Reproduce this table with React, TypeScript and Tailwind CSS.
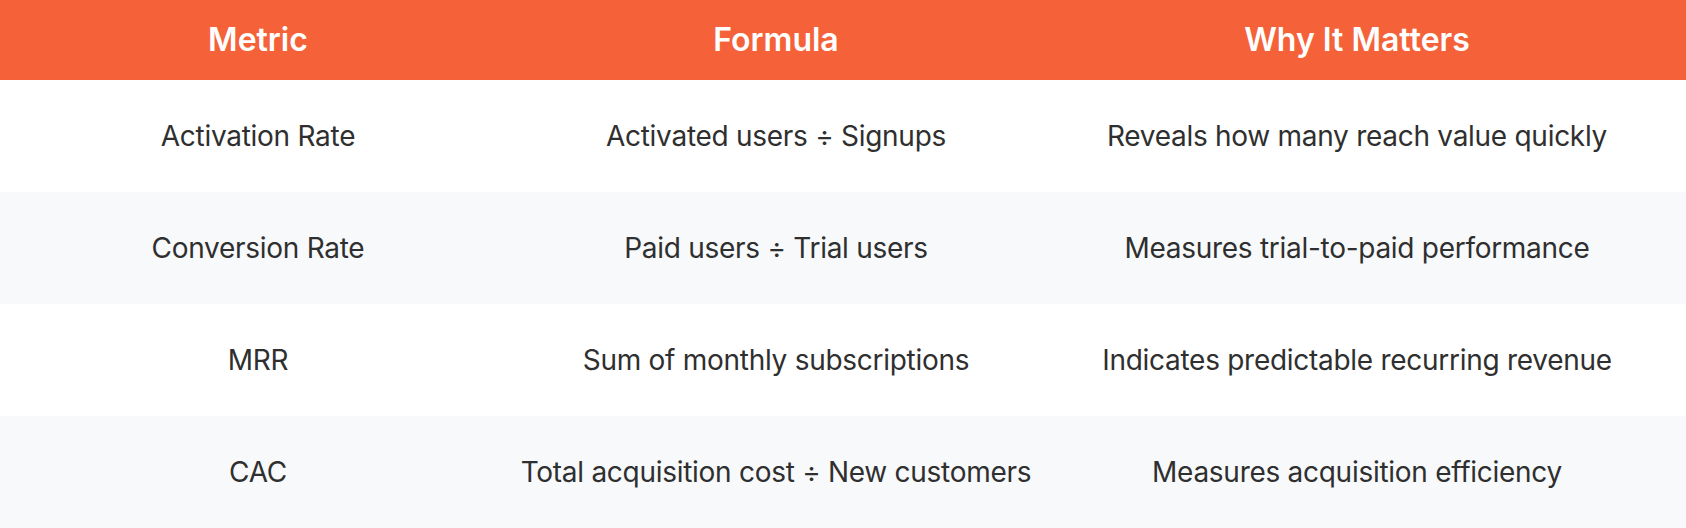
const rows = [
  { metric: 'Activation Rate', formula: 'Activated users ÷ Signups', why: 'Reveals how many reach value quickly' },
  { metric: 'Conversion Rate', formula: 'Paid users ÷ Trial users', why: 'Measures trial-to-paid performance' },
  { metric: 'MRR', formula: 'Sum of monthly subscriptions', why: 'Indicates predictable recurring revenue' },
  { metric: 'CAC', formula: 'Total acquisition cost ÷ New customers', why: 'Measures acquisition efficiency' },
];

export default function App() {
  return (
    <div className="w-[1686px] h-[528px] bg-white font-['Inter','Liberation_Sans',sans-serif] overflow-hidden">
      {/* Header */}
      <div className="grid grid-cols-[516px_520px_642px] h-20 items-center bg-[#f5623a] text-white text-[32px] font-semibold text-center whitespace-nowrap">
        <div>Metric</div>
        <div>Formula</div>
        <div>Why It Matters</div>
      </div>

      {/* Rows */}
      {rows.map((r, i) => (
        <div
          key={r.metric}
          className={`grid grid-cols-[516px_520px_642px] h-28 items-center text-center text-[28px] tracking-[-0.01em] text-[#2f2f2f] whitespace-nowrap ${
            i % 2 === 1 ? 'bg-[#f8f9fb]' : 'bg-white'
          }`}
        >
          <div>{r.metric}</div>
          <div>{r.formula}</div>
          <div>{r.why}</div>
        </div>
      ))}
    </div>
  );
}
